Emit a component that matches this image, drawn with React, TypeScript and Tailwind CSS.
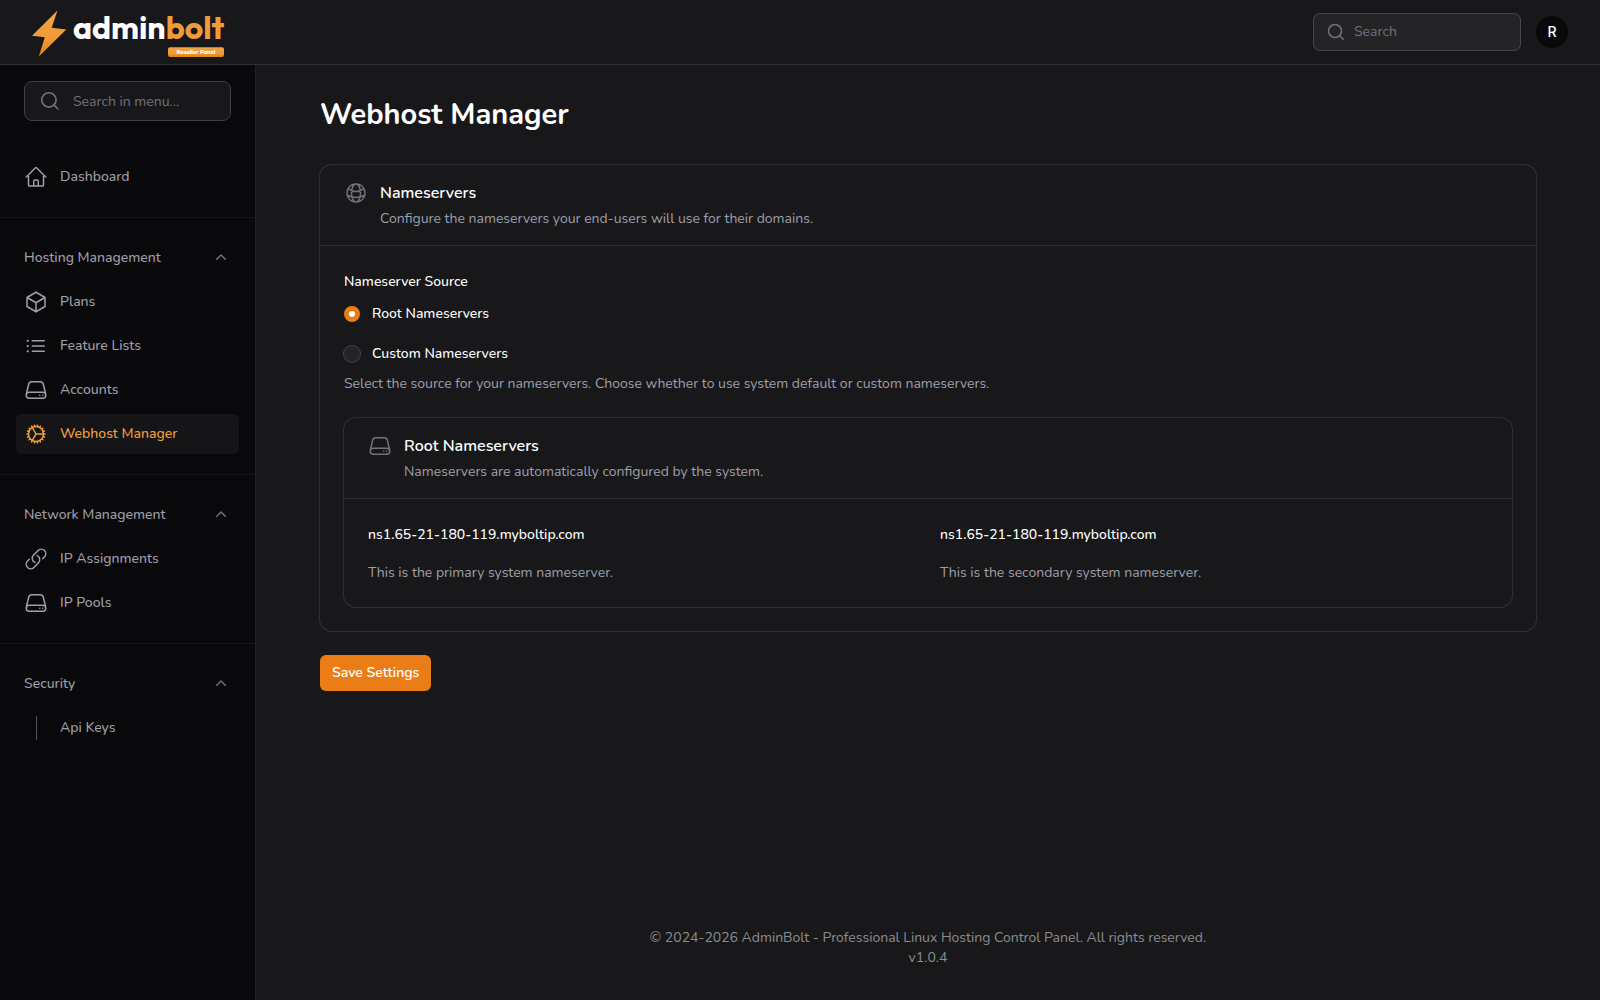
import React, { ReactNode, useState } from "react";
import { IconType } from "react-icons";
import {
  HiMiniChevronUp,
  HiOutlineCog,
  HiOutlineCube,
  HiOutlineGlobeAlt,
  HiOutlineHome,
  HiOutlineLink,
  HiOutlineListBullet,
  HiOutlineServer,
} from "react-icons/hi2";

interface NavEntry {
  label: string;
  icon?: IconType;
  active?: boolean;
}

interface NavGroupProps {
  label: string;
  items: NavEntry[];
}

const navGroups: NavGroupProps[] = [
  {
    label: "Hosting Management",
    items: [
      { label: "Plans", icon: HiOutlineCube },
      { label: "Feature Lists", icon: HiOutlineListBullet },
      { label: "Accounts", icon: HiOutlineServer },
      { label: "Webhost Manager", icon: HiOutlineCog, active: true },
    ],
  },
  {
    label: "Network Management",
    items: [
      { label: "IP Assignments", icon: HiOutlineLink },
      { label: "IP Pools", icon: HiOutlineServer },
    ],
  },
  {
    label: "Security",
    items: [{ label: "Api Keys" }],
  },
];

const Logo: React.FC = () => (
  <svg
    width="192"
    height="48"
    viewBox="0 0 192 48"
    role="img"
    aria-label="adminbolt Reseller Panel"
    className="overflow-visible font-['Outfit','Nunito',sans-serif]"
  >
    <defs>
      <linearGradient id="bolt" x1="0" y1="0" x2="0" y2="1">
        <stop offset="0" stopColor="#f1a344" />
        <stop offset="0.6" stopColor="#ee9c38" />
        <stop offset="1" stopColor="#dd8318" />
      </linearGradient>
    </defs>
    <path d="M25.5 2.5 0 27.8l12.8 1.4L6.8 48.6 34.3 21.4l-14.6-1.6z" fill="url(#bolt)" />
    <text x="41" y="31" fontSize="32" fontWeight="700" fill="#fff">
      admin<tspan fill="#ee9c3a">bolt</tspan>
    </text>
    <rect x="136" y="39.3" width="56" height="9.7" rx="2" fill="url(#bolt)" />
    <text x="164" y="46" fontSize="6" fontWeight="700" textAnchor="middle" fill="#fff">
      Reseller Panel
    </text>
  </svg>
);

const SearchIcon: React.FC<{ className: string }> = ({ className }) => (
  <svg viewBox="0 0 20 20" className={className} fill="none" stroke="currentColor" strokeWidth="1.5" strokeLinecap="round">
    <circle cx="9" cy="9" r="6.5" />
    <path d="m13.7 13.7 3.55 3.55" />
  </svg>
);

const NavItem: React.FC<NavEntry> = ({ label, icon: Icon, active }) => (
  <li>
    <a
      href="#"
      className={
        active
          ? "flex items-center gap-3 rounded-md bg-white/5 p-2 text-[#f1a13c]"
          : "flex items-center gap-3 rounded-md p-2 text-zinc-400"
      }
    >
      {Icon ? (
        <Icon className="size-6 shrink-0" />
      ) : (
        <span className="flex size-6 justify-center">
          <span className="h-full w-px bg-zinc-600" />
        </span>
      )}
      <span className="font-medium">{label}</span>
    </a>
  </li>
);

const NavGroup: React.FC<NavGroupProps> = ({ label, items }) => {
  const [open, setOpen] = useState(true);

  return (
    <div className="border-t border-white/5 px-4 py-5">
      <button
        type="button"
        onClick={() => setOpen(!open)}
        className="flex w-full items-center justify-between p-2 leading-6 font-medium text-zinc-400"
      >
        {label}
        <HiMiniChevronUp className={open ? "size-5 text-zinc-500" : "size-5 rotate-180 text-zinc-500"} />
      </button>
      {open && (
        <ul className="mt-1 flex flex-col gap-1">
          {items.map((item) => (
            <NavItem key={item.label} {...item} />
          ))}
        </ul>
      )}
    </div>
  );
};

interface SectionProps {
  title: string;
  description: string;
  icon: IconType;
  children: ReactNode;
}

const Section: React.FC<SectionProps> = ({ title, description, icon: Icon, children }) => (
  <section className="rounded-xl ring-1 ring-white/10">
    <header className="flex gap-3 px-6 py-4">
      <Icon className="size-6 shrink-0 text-zinc-500" />
      <div className="flex flex-col gap-1">
        <h2 className="text-base leading-6 font-semibold text-white">{title}</h2>
        <p className="text-zinc-400">{description}</p>
      </div>
    </header>
    <div className="border-t border-white/10 p-6">{children}</div>
  </section>
);

interface RadioProps {
  label: string;
  checked: boolean;
  onChange: () => void;
}

const Radio: React.FC<RadioProps> = ({ label, checked, onChange }) => (
  <label className="flex items-center gap-3 leading-6 font-medium text-white">
    <input
      type="radio"
      name="source"
      checked={checked}
      onChange={onChange}
      className="size-4 appearance-none rounded-full bg-white/5 ring-1 ring-white/20 checked:border-5 checked:border-[#eb7d17] checked:bg-white checked:ring-0"
    />
    {label}
  </label>
);

const nameservers = [
  { host: "ns1.65-21-180-119.myboltip.com", note: "This is the primary system nameserver." },
  { host: "ns1.65-21-180-119.myboltip.com", note: "This is the secondary system nameserver." },
];

const App: React.FC = () => {
  const [source, setSource] = useState("root");

  return (
    <div className="flex min-h-screen flex-col bg-[#18181b] font-['Nunito','Lato',sans-serif] text-sm text-zinc-400 antialiased">
      <header className="flex items-center justify-between border-b border-white/10 px-8 py-2">
        <a href="#">
          <Logo />
        </a>
        <div className="flex items-center gap-4">
          <label className="flex w-[206px] items-center gap-2 rounded-md bg-white/5 px-3 ring-1 ring-white/20">
            <SearchIcon className="size-5 shrink-0 text-zinc-500" />
            <input
              type="search"
              aria-label="Search"
              placeholder="Search"
              className="w-full min-w-0 py-2 text-sm text-white outline-none placeholder:text-zinc-500"
            />
          </label>
          <button
            type="button"
            className="size-8 rounded-full bg-zinc-950 font-['Inter',sans-serif] font-medium text-white"
          >
            R
          </button>
        </div>
      </header>

      <div className="flex grow">
        <aside className="w-64 shrink-0 border-r border-white/10 bg-zinc-950">
          <div className="px-6 pt-4 pb-9">
            <label className="flex h-10 items-center gap-3 rounded-lg border border-zinc-700 bg-[#18181b] px-3.5">
              <SearchIcon className="size-[22px] shrink-0 text-zinc-500" />
              <input
                type="search"
                aria-label="Search in menu"
                placeholder="Search in menu..."
                className="w-full min-w-0 pt-0.5 text-sm text-white outline-none placeholder:text-zinc-500"
              />
            </label>
          </div>
          <nav>
            <ul className="px-4 pb-5">
              <NavItem label="Dashboard" icon={HiOutlineHome} />
            </ul>
            {navGroups.map((group) => (
              <NavGroup key={group.label} {...group} />
            ))}
          </nav>
        </aside>

        <div className="flex grow flex-col justify-between px-16 py-8">
          <main className="flex flex-col gap-8">
            <h1 className="text-[29px] leading-9 font-bold text-white">Webhost Manager</h1>
            <form className="flex flex-col items-start gap-6" onSubmit={(e) => e.preventDefault()}>
              <div className="w-full">
                <Section
                  title="Nameservers"
                  description="Configure the nameservers your end-users will use for their domains."
                  icon={HiOutlineGlobeAlt}
                >
                  <fieldset className="flex flex-col gap-2">
                    <legend className="mb-2 leading-6 font-medium text-white">Nameserver Source</legend>
                    <div className="flex flex-col items-start gap-4">
                      <Radio label="Root Nameservers" checked={source === "root"} onChange={() => setSource("root")} />
                      <Radio
                        label="Custom Nameservers"
                        checked={source === "custom"}
                        onChange={() => setSource("custom")}
                      />
                    </div>
                    <p>Select the source for your nameservers. Choose whether to use system default or custom nameservers.</p>
                  </fieldset>
                  <div className="mt-6">
                    <Section
                      title="Root Nameservers"
                      description="Nameservers are automatically configured by the system."
                      icon={HiOutlineServer}
                    >
                      <div className="grid grid-cols-2 gap-6">
                        {nameservers.map(({ host, note }) => (
                          <div key={note} className="flex flex-col gap-4">
                            <h3 className="leading-6 font-medium text-white">{host}</h3>
                            <p>{note}</p>
                          </div>
                        ))}
                      </div>
                    </Section>
                  </div>
                </Section>
              </div>
              <button type="submit" className="rounded-md bg-[#eb7d17] px-3 py-2 font-semibold text-white">
                Save Settings
              </button>
            </form>
          </main>
          <footer className="text-center text-[#8c8c8e]">
            <p>© 2024-2026 AdminBolt - Professional Linux Hosting Control Panel. All rights reserved.</p>
            <p>v1.0.4</p>
          </footer>
        </div>
      </div>
    </div>
  );
};

export default App;
